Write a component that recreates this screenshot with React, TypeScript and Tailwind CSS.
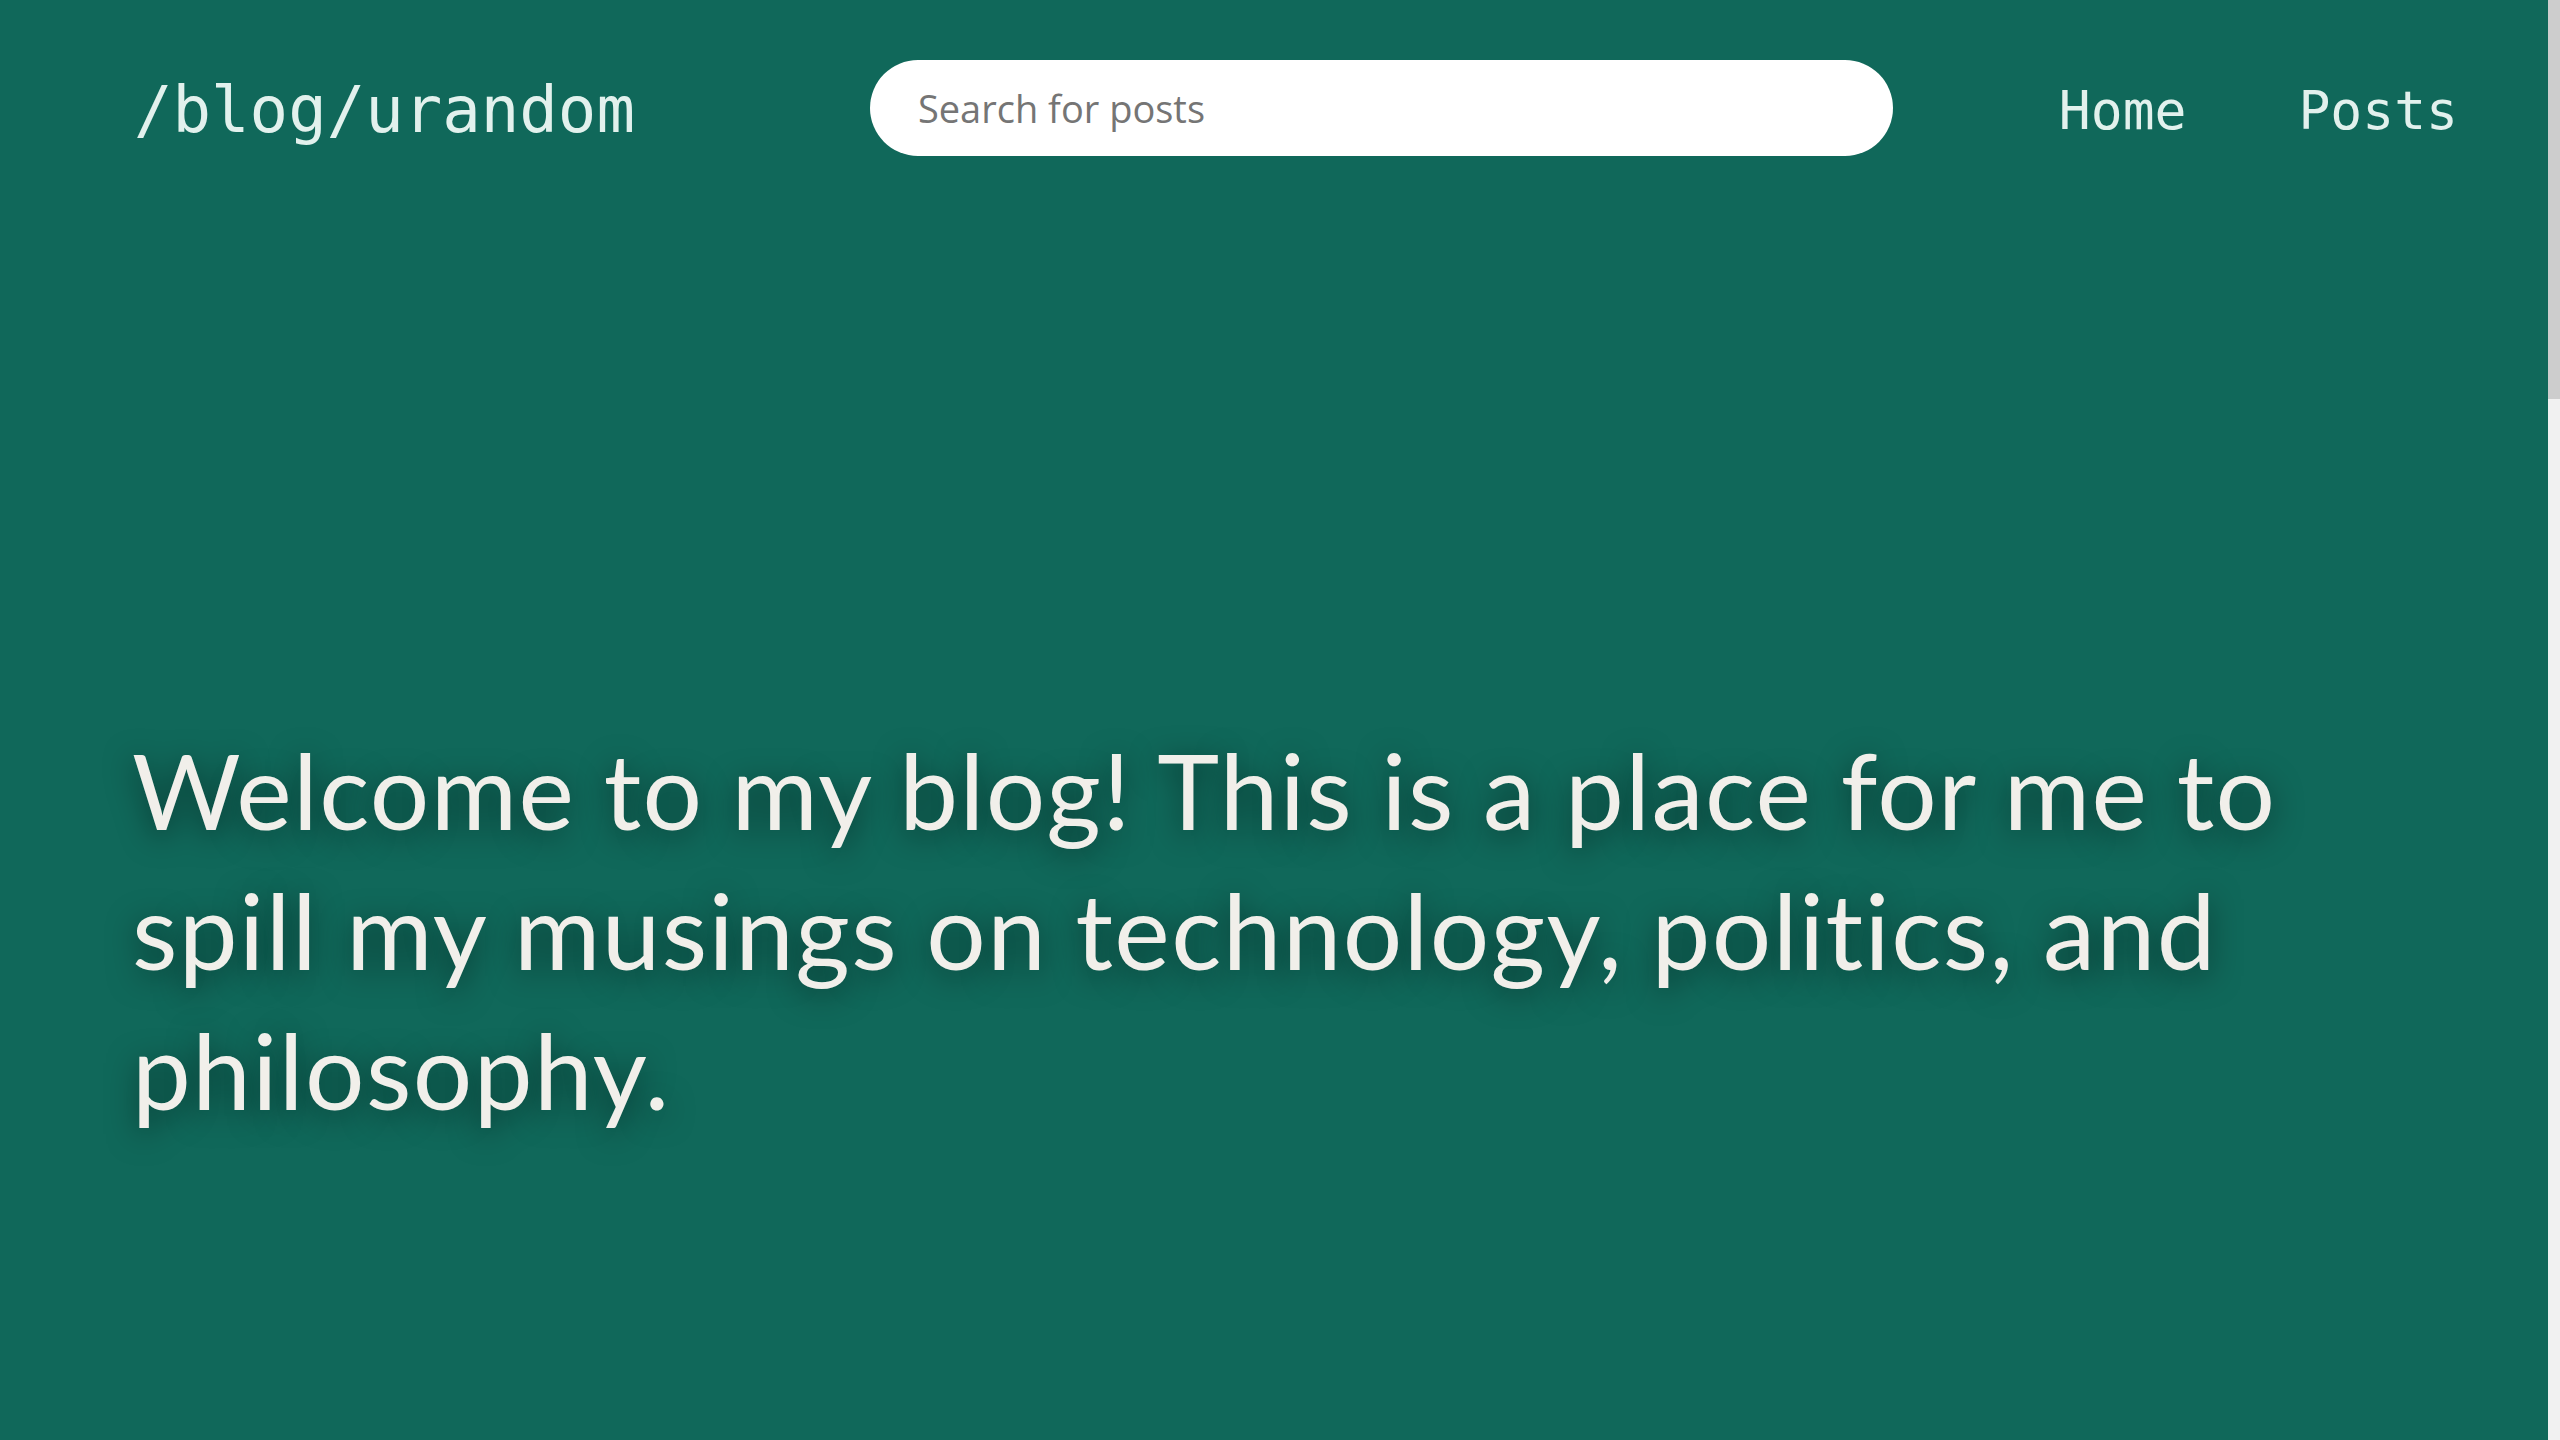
import React from "react";

export default function App() {
  return (
    <div className="flex h-screen w-full overflow-hidden">
      <div className="flex-1 bg-[#10685a] flex flex-col">
        <header className="flex items-center pl-[134px] pr-[90px] pt-[60px]">
          <a className="mt-[4px] text-[64px] leading-none text-[#e2f1ed] [font-family:'DejaVu_Sans_Mono',monospace]">
            /blog/urandom
          </a>
          <div className="ml-[235px] w-[1023px] h-[96px] rounded-full bg-white flex items-center pl-[48px]">
            <input
              className="w-full bg-transparent outline-none text-[38px] text-[#333] placeholder:text-[#757575] [font-family:'Open_Sans',sans-serif]"
              placeholder="Search for posts"
            />
          </div>
          <nav className="ml-auto mt-[5px] flex items-center gap-[112px] text-[53px] leading-none text-[#e2f1ed] [font-family:'DejaVu_Sans_Mono',monospace]">
            <a>Home</a>
            <a>Posts</a>
          </nav>
        </header>
        <main className="pl-[132px] pr-[130px] mt-[563px]">
          <h1 className="text-[105px] leading-[140px] tracking-[1.4px] text-[#f1efea] [font-variant-ligatures:none] [font-family:'Lato',sans-serif] [text-shadow:0_6px_30px_rgba(0,0,0,0.5)]">
            Welcome to my blog! This is a place for me to spill my musings on technology, politics, and philosophy.
          </h1>
        </main>
      </div>
      <div className="w-[12px] h-full bg-[#f1f1f1] flex flex-col">
        <div className="h-[399px] bg-[#cdcdcd]" />
      </div>
    </div>
  );
}
